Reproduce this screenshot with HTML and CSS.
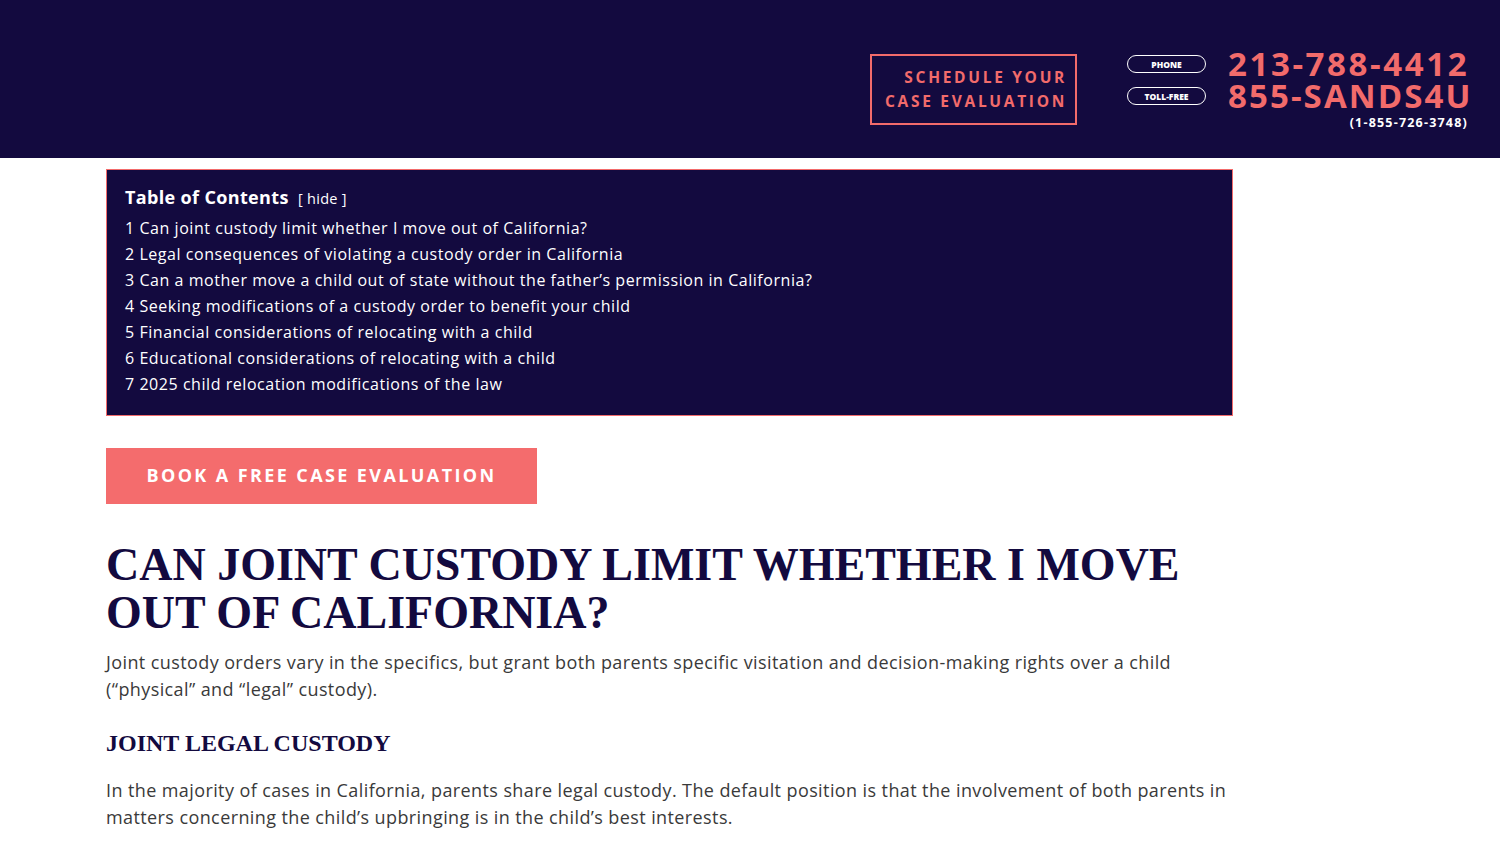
FILE: index.html
```html
<!DOCTYPE html>
<html lang="en">
<head>
<meta charset="utf-8">
<title>Can joint custody limit whether I move out of California?</title>
<link rel="stylesheet" href="styles.css">
</head>
<body>
<header class="site-header">
  <a class="schedule-btn" href="#">SCHEDULE YOUR<br>CASE EVALUATION</a>
  <div class="phones">
    <div class="phone-row">
      <span class="pill">PHONE</span>
      <span class="number">213-788-4412</span>
    </div>
    <div class="phone-row">
      <span class="pill">TOLL-FREE</span>
      <span class="number number-alt">855-SANDS4U</span>
    </div>
    <div class="phone-sub">(1-855-726-3748)</div>
  </div>
</header>
<main class="content">
  <nav class="toc">
    <div class="toc-title"><span class="toc-head">Table of Contents</span> <span class="toc-toggle">[ hide ]</span></div>
    <ol class="toc-list">
      <li>1 Can joint custody limit whether I move out of California?</li>
      <li>2 Legal consequences of violating a custody order in California</li>
      <li>3 Can a mother move a child out of state without the father’s permission in California?</li>
      <li>4 Seeking modifications of a custody order to benefit your child</li>
      <li>5 Financial considerations of relocating with a child</li>
      <li>6 Educational considerations of relocating with a child</li>
      <li>7 2025 child relocation modifications of the law</li>
    </ol>
  </nav>
  <a class="cta" href="#">BOOK A FREE CASE EVALUATION</a>
  <h1 class="title">CAN JOINT CUSTODY LIMIT WHETHER I MOVE OUT OF CALIFORNIA?</h1>
  <p class="para">Joint custody orders vary in the specifics, but grant both parents specific visitation and decision-making rights over a child (“physical” and “legal” custody).</p>
  <h2 class="subtitle">JOINT LEGAL CUSTODY</h2>
  <p class="para">In the majority of cases in California, parents share legal custody. The default position is that the involvement of both parents in matters concerning the child’s upbringing is in the child’s best interests.</p>
</main>
</body>
</html>
```

FILE: styles.css
```css
* { box-sizing: border-box; }
html, body { margin: 0; padding: 0; background: #ffffff; }
body { font-family: "Open Sans", "DejaVu Sans", sans-serif; color: #3a3a3a; }

.site-header {
  height: 158px;
  background: #130a3f;
  display: flex;
  justify-content: flex-end;
  align-items: flex-start;
  padding: 48px 33px 0 0;
}
.schedule-btn {
  margin-top: 6px;
  width: 207px;
  height: 71px;
  border: 2px solid #f26b6b;
  color: #f26b6b;
  text-decoration: none;
  font-weight: 700;
  font-size: 15.5px;
  letter-spacing: 2.7px;
  line-height: 24px;
  text-align: right;
  padding: 9px 8px 0 0;
  margin-right: 50px;
  white-space: nowrap;
}
.phones { display: flex; flex-direction: column; align-items: flex-end; }
.phone-row { display: flex; align-items: center; height: 32px; }
.pill {
  width: 79px;
  height: 18px;
  border: 1.5px solid #ffffff;
  border-radius: 9px;
  color: #fff;
  font-size: 8.5px;
  font-weight: 800;
  display: flex;
  align-items: center;
  justify-content: center;
  margin-right: 22px;
}
.number {
  color: #f26b6b;
  font-weight: 700;
  font-size: 33px;
  letter-spacing: 2.6px;
  line-height: 32px;
  width: 241px;
  text-align: right;
  white-space: nowrap;
  margin-right: -2px;
}
.number-alt { letter-spacing: 2.1px; }
.phone-sub {
  color: #fff;
  font-weight: 700;
  font-size: 12.5px;
  line-height: 16px;
  letter-spacing: 1.2px;
  margin-top: 3px;
  margin-right: -1px;
}

.content { width: 1127px; margin-left: 106px; padding-top: 11px; }
.toc {
  background: #130a3f;
  border: 1px solid #f26b6b;
  padding: 15px 18px 18px 18px;
  color: #fff;
}
.toc-title { margin-bottom: 6px; }
.toc-head { font-weight: 700; font-size: 18px; letter-spacing: 0.35px; }
.toc-toggle { font-size: 14.5px; margin-left: 5px; letter-spacing: 0.3px; }
.toc-list { list-style: none; margin: 0; padding: 0; }
.toc-list li { font-size: 16px; line-height: 26px; letter-spacing: 0.55px; }

.cta {
  display: inline-flex;
  align-items: center;
  justify-content: center;
  margin-top: 32px;
  width: 431px;
  height: 56px;
  background: #f46c6d;
  color: #fff;
  text-decoration: none;
  font-weight: 700;
  font-size: 18px;
  letter-spacing: 2.4px;
  padding-bottom: 2px;
}
.title {
  font-family: "Liberation Serif", "DejaVu Serif", serif;
  font-weight: 700;
  font-size: 46px;
  line-height: 48px;
  color: #130a3f;
  margin: 37px 0 0 0;
}
.para { font-size: 18px; line-height: 27px; letter-spacing: 0.4px; margin: 12px 0 0 0; }
.subtitle {
  font-family: "Liberation Serif", "DejaVu Serif", serif;
  font-weight: 700;
  font-size: 24px;
  line-height: 30px;
  color: #130a3f;
  margin: 25px 0 0 0;
}
.subtitle + .para { margin-top: 19px; }
```
